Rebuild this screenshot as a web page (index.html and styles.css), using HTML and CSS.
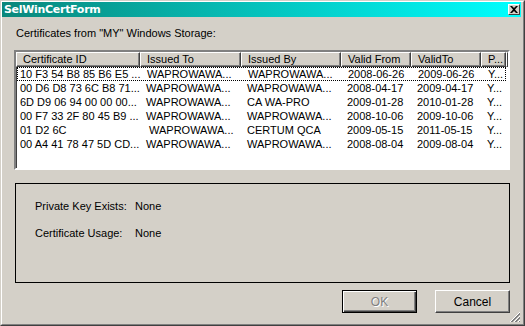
FILE: index.html
```html
<!DOCTYPE html>
<html>
<head>
<meta charset="utf-8">
<link rel="stylesheet" href="styles.css">
</head>
<body>
<div class="window">
  <div class="frame">
    <div class="titlebar">
      <span class="title">SelWinCertForm</span>
      <span class="close"><svg width="8" height="7" viewBox="0 0 8 7"><path d="M0 0h2l2 2 2-2h2L5 3.5 8 7H6L4 5 2 7H0l3-3.5z" fill="#000"/></svg></span>
    </div>
    <div class="content">
      <div class="caption">Certificates from "MY" Windows Storage:</div>
      <div class="listview">
        <div class="grid">
          <div class="hd c1">Certificate ID</div>
          <div class="hd">Issued To</div>
          <div class="hd">Issued By</div>
          <div class="hd">Valid From</div>
          <div class="hd">ValidTo</div>
          <div class="hd">P...</div>
          <div class="hd-rest"></div>
        </div>
        <div class="rows">
          <div class="row focus">
            <div class="cell c1">10 F3 54 B8 85 B6 E5 ...</div><div class="cell">WAPROWAWA...</div><div class="cell">WAPROWAWA...</div><div class="cell">2008-06-26</div><div class="cell">2009-06-26</div><div class="cell">Y...</div>
          </div>
          <div class="row">
            <div class="cell c1">00 D6 D8 73 6C B8 71...</div><div class="cell">WAPROWAWA...</div><div class="cell">WAPROWAWA...</div><div class="cell">2008-04-17</div><div class="cell">2009-04-17</div><div class="cell">Y...</div>
          </div>
          <div class="row">
            <div class="cell c1">6D D9 06 94 00 00 00...</div><div class="cell">WAPROWAWA...</div><div class="cell">CA WA-PRO</div><div class="cell">2009-01-28</div><div class="cell">2010-01-28</div><div class="cell">Y...</div>
          </div>
          <div class="row">
            <div class="cell c1">00 F7 33 2F 80 45 B9 ...</div><div class="cell">WAPROWAWA...</div><div class="cell">WAPROWAWA...</div><div class="cell">2008-10-06</div><div class="cell">2009-10-06</div><div class="cell">Y...</div>
          </div>
          <div class="row">
            <div class="cell c1">01 D2 6C</div><div class="cell shift">WAPROWAWA...</div><div class="cell">CERTUM QCA</div><div class="cell">2009-05-15</div><div class="cell">2011-05-15</div><div class="cell">Y...</div>
          </div>
          <div class="row">
            <div class="cell c1">00 A4 41 78 47 5D CD...</div><div class="cell">WAPROWAWA...</div><div class="cell">WAPROWAWA...</div><div class="cell">2008-08-04</div><div class="cell">2009-08-04</div><div class="cell">Y...</div>
          </div>
        </div>
      </div>
      <div class="panel">
        <div class="info">
          <span>Private Key Exists:</span><span>None</span>
          <span>Certificate Usage:</span><span>None</span>
        </div>
      </div>
      <div class="buttons">
        <div class="btn default disabled"><span>OK</span></div>
        <div class="btn"><span>Cancel</span></div>
      </div>
    </div>
    <svg class="grip" width="12" height="12" viewBox="0 0 12 12">
      <path d="M11 1L1 11M11 5L5 11M11 9L9 11" stroke="#fff" stroke-width="1"/>
      <path d="M11 2L2 11M11 3L3 11M11 6L6 11M11 7L7 11M11 10L10 11" stroke="#808080" stroke-width="1"/>
    </svg>
  </div>
</div>
</body>
</html>
```
FILE: styles.css
```css
html, body {
  margin: 0;
  padding: 0;
  background: #d4d0c8;
}
body {
  font-family: "Liberation Sans", Arial, sans-serif;
  font-size: 11px;
  color: #000;
}
.window {
  width: 525px;
  height: 326px;
  box-sizing: border-box;
  border: 1px solid;
  border-color: #d4d0c8 #404040 #404040 #d4d0c8;
}
.frame {
  position: relative;
  height: 100%;
  box-sizing: border-box;
  border: 1px solid;
  border-color: #fff #808080 #808080 #fff;
  padding-right: 2px;
  display: flex;
  flex-direction: column;
}
.titlebar {
  height: 15px;
  background: linear-gradient(to right, #0a877b, #00ffff);
  display: flex;
  align-items: center;
  justify-content: space-between;
  padding: 0 1px 0 2px;
}
.title {
  color: #fff;
  font-family: "DejaVu Sans", Verdana, sans-serif;
  font-weight: bold;
  font-size: 11px;
  line-height: 15px;
  letter-spacing: -0.3px;
}
.close {
  width: 12px;
  height: 11px;
  box-sizing: border-box;
  background: #d4d0c8;
  border: 1px solid;
  border-color: #fff #404040 #404040 #fff;
  display: flex;
  align-items: center;
  justify-content: center;
}
.close svg { display: block; }
.content {
  padding: 10px 0 0 12px;
  display: flex;
  flex-direction: column;
}
.caption {
  line-height: 13px;
  margin-left: 2px;
  margin-bottom: 10px;
}
.listview {
  width: 496px;
  height: 120px;
  box-sizing: border-box;
  border: 2px solid;
  border-color: #808080 #fff #fff #808080;
  background: #fff;
  box-shadow: inset 1px 1px 0 #404040;
  display: flex;
  flex-direction: column;
  overflow: hidden;
}
.grid {
  display: grid;
  grid-template-columns: 124px 101px 100px 70px 70px 25px 1fr;
  height: 15px;
}
.hd, .hd-rest {
  box-sizing: border-box;
  background: #d4d0c8;
  border-top: 1px solid #fff;
  border-left: 1px solid #fff;
  border-right: 1px solid #404040;
  border-bottom: 1px solid #404040;
  box-shadow: inset -1px -1px 0 #808080;
  line-height: 12px;
  padding-left: 6px;
  white-space: nowrap;
  overflow: hidden;
}
.hd-rest { padding: 0; }
.rows {
  display: flex;
  flex-direction: column;
}
.row {
  display: grid;
  grid-template-columns: 124px 101px 100px 70px 70px 25px;
  height: 14px;
  box-sizing: border-box;
  width: 490px;
}
.row.focus {
  outline: 1px dotted #000;
  outline-offset: -1px;
  margin-left: 1px;
  width: 489px;
}
.row.focus .c1 { padding-left: 3px; }
.cell {
  line-height: 14px;
  padding-left: 6px;
  white-space: nowrap;
  overflow: hidden;
}
.cell.c1 { padding-left: 4px; }
.cell.shift { padding-left: 9px; }
.panel {
  margin-top: 13px;
  margin-left: 1px;
  width: 495px;
  height: 100px;
  box-sizing: border-box;
  border: 1px solid #000;
  padding: 16px 0 0 19px;
}
.info {
  display: grid;
  grid-template-columns: 100px auto;
  row-gap: 14px;
  line-height: 13px;
}
.buttons {
  display: flex;
  justify-content: flex-end;
  gap: 18px;
  margin-top: 7px;
  width: 496px;
}
.btn {
  width: 75px;
  height: 23px;
  box-sizing: border-box;
  border: 1px solid;
  border-color: #fff #404040 #404040 #fff;
  box-shadow: inset -1px -1px 0 #808080;
  display: flex;
  align-items: center;
  justify-content: center;
  font-size: 12px;
}
.btn.default {
  border: 1px solid #000;
  box-shadow: inset 1px 1px 0 #fff, inset -1px -1px 0 #404040, inset -2px -2px 0 #808080;
}
.btn.disabled span {
  color: #808080;
  text-shadow: 1px 1px 0 #fff;
}
.grip {
  position: absolute;
  right: 2px;
  bottom: 1px;
}
```
